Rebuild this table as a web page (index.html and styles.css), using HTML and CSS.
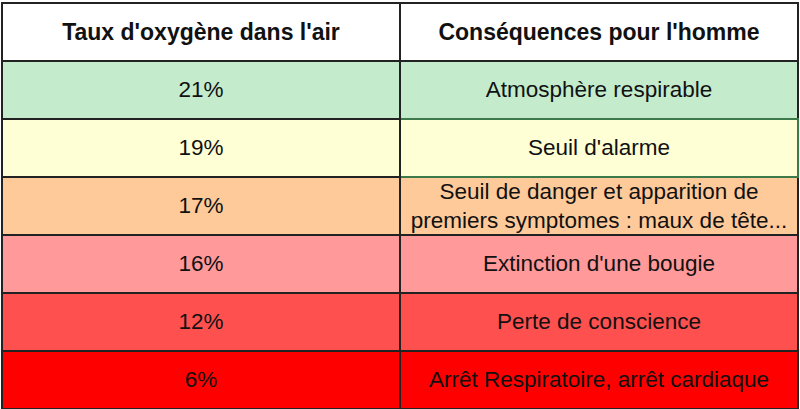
FILE: index.html
```html
<!DOCTYPE html>
<html lang="fr">
<head>
<meta charset="utf-8">
<link rel="stylesheet" href="styles.css">
</head>
<body>
<table class="o2">
  <thead>
    <tr><th>Taux d'oxygène dans l'air</th><th>Conséquences pour l'homme</th></tr>
  </thead>
  <tbody>
    <tr class="r1"><td>21%</td><td>Atmosphère respirable</td></tr>
    <tr class="r2"><td>19%</td><td class="hl">Seuil d'alarme</td></tr>
    <tr class="r3"><td>17%</td><td><div class="two">Seuil de danger et apparition de<br>premiers symptomes : maux de tête...</div></td></tr>
    <tr class="r4"><td>16%</td><td>Extinction d'une bougie</td></tr>
    <tr class="r5"><td>12%</td><td>Perte de conscience</td></tr>
    <tr class="r6"><td>6%</td><td>Arrêt Respiratoire, arrêt cardiaque</td></tr>
  </tbody>
</table>
</body>
</html>
```
FILE: styles.css
```css
html, body { margin: 0; padding: 0; background: #fff; }
body { padding: 2px 0 0 1px; }
.o2 {
  border-collapse: collapse;
  width: 798px;
  table-layout: fixed;
  font-family: "Liberation Sans", Arial, sans-serif;
  font-size: 22.5px;
  color: #111;
}
.o2 th, .o2 td {
  border: 2px solid #222;
  height: 56px;
  padding: 0;
  text-align: center;
  vertical-align: middle;
  width: 50%;
  white-space: nowrap;
}
.o2 th { font-weight: bold; background: #fff; font-size: 23px; }
.two { line-height: 29px; height: 56px; display: flex; flex-direction: column; justify-content: center; }
.r1 td { background: #c3ebcc; }
.r2 td { background: #ffffd5; }
.r3 td { background: #ffca9a; }
.r4 td { background: #ff999a; }
.r5 td { background: #ff5050; }
.r6 td { background: #ff0000; }
.r1 td + td { border-bottom-color: #3c7a4c; }
.o2 td.hl { border-color: #3c7a4c; }
```
